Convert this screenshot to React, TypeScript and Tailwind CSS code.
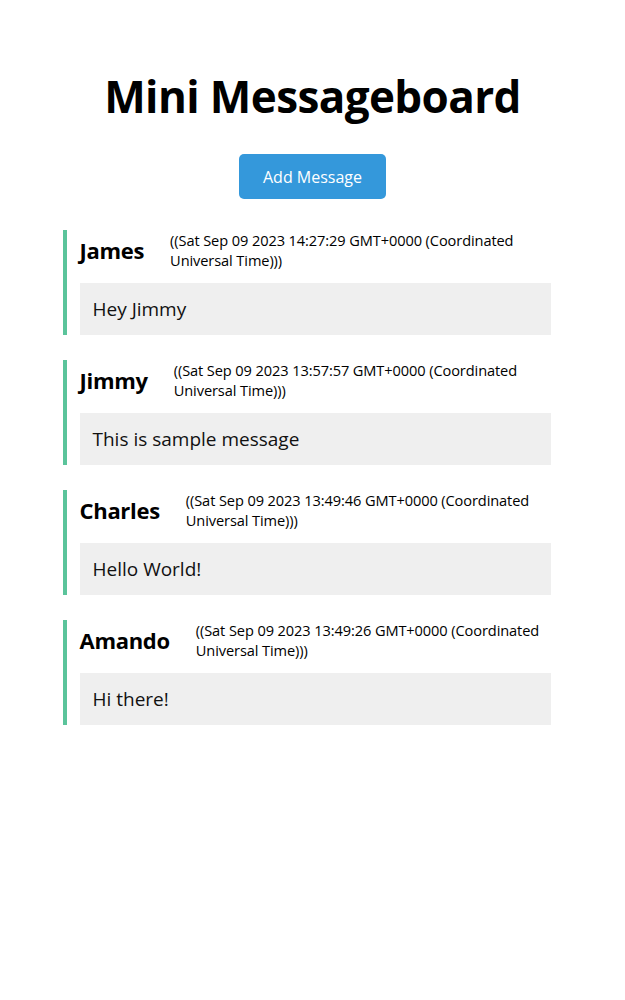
import React from "react";

const messages = [
  { user: "James", date: "14:27:29", text: "Hey Jimmy" },
  { user: "Jimmy", date: "13:57:57", text: "This is sample message" },
  { user: "Charles", date: "13:49:46", text: "Hello World!" },
  { user: "Amando", date: "13:49:26", text: "Hi there!" },
];

export default function App() {
  return (
    <div className="min-h-[1000px] bg-white text-black" style={{ fontFamily: '"Open Sans", "Noto Sans", sans-serif' }}>
      <div className="mx-auto w-[500px] pt-[66px]">
        <h1 className="text-center text-[44px] font-bold leading-[60px] tracking-[-0.6px]">Mini Messageboard</h1>
        <div className="mt-[28px] flex justify-center">
          <button className="h-[45px] w-[147px] rounded-[5px] bg-[#3498db] text-[16px] text-white">Add Message</button>
        </div>
        <div className="mt-[31px] flex flex-col gap-[25px]">
          {messages.map((m) => (
            <div key={m.user} className="border-l-4 border-[#5bc49b] pl-[13px] pr-[12px]">
              <div className="flex items-center gap-[26px]">
                <div className="text-[22px] font-bold leading-[30px] tracking-[-0.3px]">{m.user}</div>
                <div className="text-[14.6px] leading-[20px] tracking-[-0.1px]">
                  ((Sat Sep 09 2023 {m.date} GMT+0000 (Coordinated
                  <br />
                  Universal Time)))
                </div>
              </div>
              <div className="mt-[13px] flex h-[52px] items-center bg-[#efefef] px-[13px] text-[19px] text-[#111]">
                {m.text}
              </div>
            </div>
          ))}
        </div>
      </div>
    </div>
  );
}
